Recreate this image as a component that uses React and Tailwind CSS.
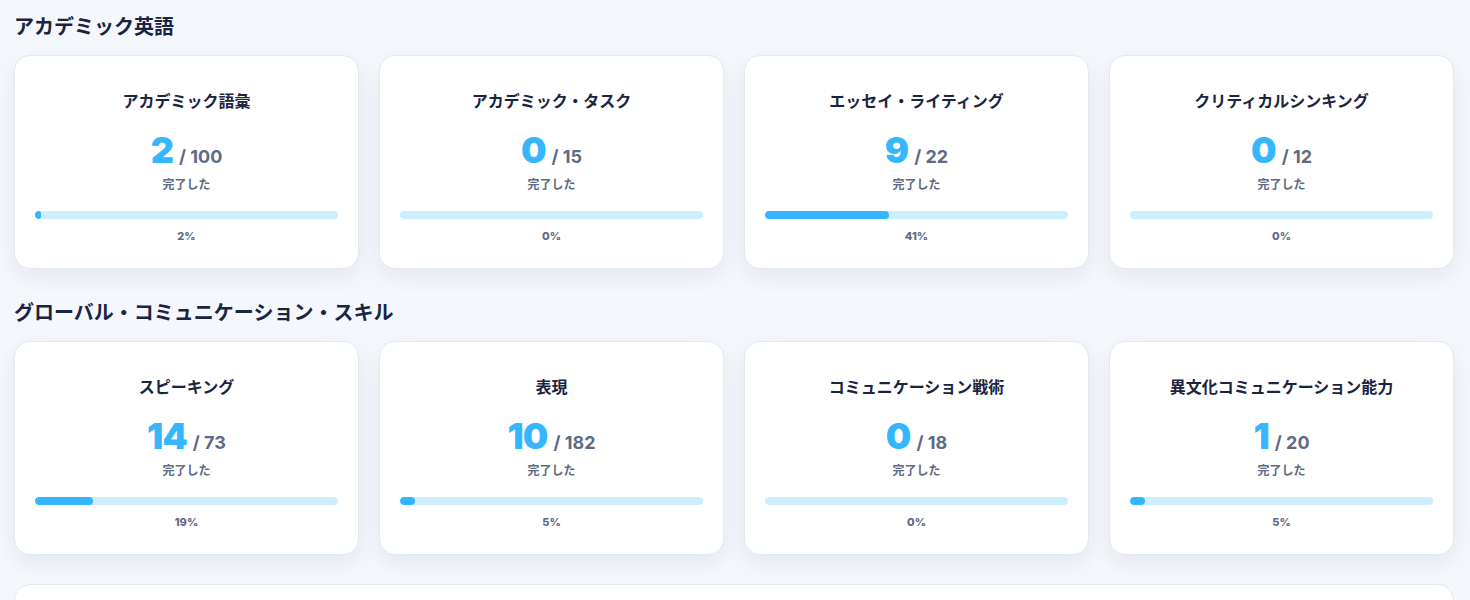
import React from 'react';

const sections = [
  {
    title: 'アカデミック英語',
    items: [
      { name: 'アカデミック語彙', done: 2, total: 100 },
      { name: 'アカデミック・タスク', done: 0, total: 15 },
      { name: 'エッセイ・ライティング', done: 9, total: 22 },
      { name: 'クリティカルシンキング', done: 0, total: 12 },
    ],
  },
  {
    title: 'グローバル・コミュニケーション・スキル',
    items: [
      { name: 'スピーキング', done: 14, total: 73 },
      { name: '表現', done: 10, total: 182 },
      { name: 'コミュニケーション戦術', done: 0, total: 18 },
      { name: '異文化コミュニケーション能力', done: 1, total: 20 },
    ],
  },
];

function SkillCard({ name, done, total }) {
  const pct = Math.round((done / total) * 100);
  return (
    <div className="bg-white rounded-2xl border border-[#e4e9f1] shadow-[0_8px_22px_rgba(30,50,100,0.07)] h-[214px] px-5 pt-[34px] flex flex-col items-center">
      <h3 className="text-[16px] leading-[22px] font-bold text-[#1b2440]">{name}</h3>
      <div className="mt-[20px] flex items-baseline gap-[6px] leading-none">
        <span className="text-[36px] font-black text-[#35b6ff] tracking-tight">{done}</span>
        <span className="text-[18px] font-bold text-[#5f6a84]">/ {total}</span>
      </div>
      <p className="mt-[9px] text-[12px] leading-[15px] font-bold text-[#5f6a84]">完了した</p>
      <div className="mt-[19px] w-full h-2 rounded-full bg-[#cdeefe] overflow-hidden">
        <div className="h-full rounded-full bg-[#33b5ff]" style={{ width: pct + '%' }} />
      </div>
      <p className="mt-[10px] text-[11px] leading-[14px] font-extrabold text-[#5f6a84]">{pct}%</p>
    </div>
  );
}

export default function App() {
  return (
    <div className="min-h-screen bg-[#f4f7fb] pl-[14px] pr-[16px] pt-[15px] font-['Inter','Noto_Sans_CJK_JP',sans-serif]">
      <div className="flex flex-col gap-8">
        {sections.map((s) => (
          <section key={s.title}>
            <h2 className="text-[20px] leading-6 font-bold text-[#1b2440]">{s.title}</h2>
            <div className="mt-4 grid grid-cols-4 gap-5">
              {s.items.map((it) => (
                <SkillCard key={it.name} {...it} />
              ))}
            </div>
          </section>
        ))}
      </div>
      <div className="mt-[29px] bg-white rounded-2xl border border-[#e4e9f1] h-[120px]" />
    </div>
  );
}
